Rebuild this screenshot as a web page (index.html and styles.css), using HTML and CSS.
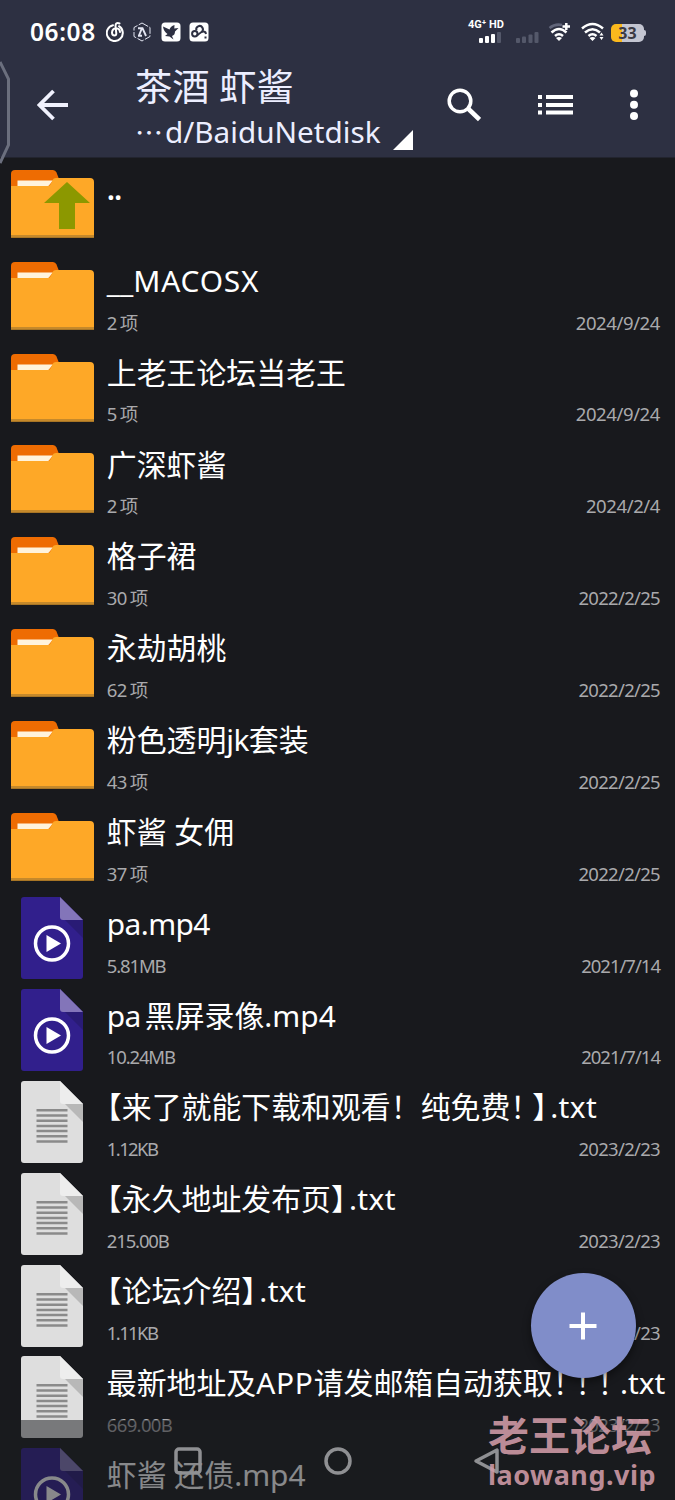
FILE: index.html
```html
<!DOCTYPE html>
<html lang="zh-CN">
<head>
<meta charset="utf-8">
<title>BaiduNetdisk</title>
<link rel="stylesheet" href="styles.css">
</head>
<body>
<svg class="defs" width="0" height="0" aria-hidden="true">
  <symbol id="folder" viewBox="0 0 84 68">
    <path d="M0 15V4Q0 0 4 0H42Q44.500 0 45.500 2.500L48 9V18H0Z" fill="#ee6c02"/>
    <path d="M6.500 10.500H42L37 16.500H6.500Z" fill="#fff3dc"/>
    <path d="M0 16H37Q39 16 40 13.500L41.500 10Q42.500 8 45 8H79Q83 8 83 12V67.500H0Z" fill="#fea827"/>
    <path d="M0 65H83V67.500H0Z" fill="#c5892b"/>
  </symbol>
  <symbol id="video" viewBox="0 0 62 82">
    <path d="M3 0H39L62 23V79Q62 82 59 82H3Q0 82 0 79V3Q0 0 3 0Z" fill="#311f8c"/>
    <path d="M44 23H62V41Z" fill="#291b75"/>
    <path d="M39 0L62 23H42Q39 23 39 20Z" fill="#8375b9"/>
    <circle cx="31" cy="46.500" r="16.500" fill="none" stroke="#fff" stroke-width="3.500"/>
    <path d="M25.500 38V55L40 46.500Z" fill="#fff"/>
  </symbol>
  <symbol id="text" viewBox="0 0 62 82">
    <path d="M3 0H39L62 23V79Q62 82 59 82H3Q0 82 0 79V3Q0 0 3 0Z" fill="#dedede"/>
    <path d="M44 23H62V41Z" fill="#b8b8b8"/>
    <path d="M39 0L62 23H42Q39 23 39 20Z" fill="#ededed"/>
    <path d="M15.500 29.300h31M15.500 34.500h31M15.500 39.700h31M15.500 44.900h31M15.500 50.100h31M15.500 55.300h31M15.500 60.500h31" stroke="#8a8a8a" stroke-width="2.500"/>
  </symbol>
</svg>
<div class="screen">
  <header class="top">
    <div class="status">
      <div class="status-left">
        <span class="clock">06:08</span>
        <svg width="19" height="20" viewBox="0 0 19 20" fill="none" stroke="#fff" stroke-width="2" stroke-linecap="round"><path d="M7 3.200A8 8 0 1 0 13 4.200M13.500 1.500Q9.500 0 9.500 4L10.300 11.500Q10.300 13.500 8.500 13.500Q6 13.500 6 10.500Q6.300 6.500 10 6.200Q13.800 6.500 14 10"/></svg>
        <svg width="18" height="20" viewBox="0 0 18 20" fill="none" stroke="#e4e6f2" stroke-width="1"><path d="M9 1L17 5.500V14.500L9 19L1 14.500V5.500Z" stroke-dasharray="7 1.500"/><path d="M5 6.200H9.500L13 14M5 13.800H9M8.800 6.500L6 13.500" stroke-width="1.900"/></svg>
        <svg class="app" width="20" height="20" viewBox="0 0 20 20"><rect x=".5" y=".5" width="19" height="19" rx="3.500" fill="#fff"/><path d="M2 4.500L8.500 7.500Q9.500 4 13.500 3L13.300 6.500L17.500 6L14 9.500Q14 13 11 14L12.500 17.500L8.500 14.500L4 14L6.500 12Q2.500 9 2 4.500Z" fill="#2d3042"/></svg>
        <svg class="app" width="20" height="20" viewBox="0 0 20 20"><rect x=".5" y=".5" width="19" height="19" rx="3.500" fill="#fff"/><g fill="none" stroke="#2d3042" stroke-width="2"><circle cx="5.800" cy="11.800" r="2.700"/><path d="M7.500 8.500A3.300 3.300 0 1 1 12.500 10Q10.500 11.500 8 13.500M12.500 10Q16.500 8.500 17 12M16.500 14.500V16.500"/></g></svg>
      </div>
      <div class="status-right">
        <div class="cell"><span class="net">4G⁺ HD</span><svg class="bars" width="24" height="11" viewBox="0 0 24 11"><g fill="#fff"><rect x="1" y="6" width="4" height="5" rx="1"/><rect x="7" y="4" width="4" height="7" rx="1"/><rect x="13" y="2" width="4" height="9" rx="1"/></g><rect x="19" y="0" width="4" height="11" rx="1" fill="#54586a"/></svg></div>
        <svg class="bars-off" width="23" height="12" viewBox="0 0 23 12" fill="#54586a"><rect x="0" y="6" width="4" height="5" rx="1"/><rect x="6" y="4.500" width="4" height="6.500" rx="1"/><rect x="12.500" y="2.500" width="4" height="8.500" rx="1"/><rect x="18.500" y="0" width="4" height="11" rx="1"/></svg>
        <svg class="wifi-plus" width="24" height="20" viewBox="0 0 24 20" fill="none" stroke="#fff" stroke-width="2.500"><path d="M1.500 6Q7 1.500 14 3" stroke="#61657a"/><path d="M3.500 10.500Q11 3.500 18.500 10.500M7 14Q11 10.500 15 14M14.500 4.500H22M18.300 1V8"/><path d="M8 16Q11 13.800 14 16L11 19Z" fill="#fff" stroke="none"/></svg>
        <svg class="wifi" width="24" height="20" viewBox="0 0 24 20" fill="none" stroke="#fff" stroke-width="2.500"><path d="M1 6.500Q11.500-2.500 22 6.500M4 10.500Q11.500 4 19 10.500M7.500 14Q11.500 10.500 15.500 14"/><path d="M8.500 16Q11.500 13.800 14.500 16L11.500 19ZM18.500 13.500L20.500 10.500L22.500 13.500ZM18.500 15L20.500 18L22.500 15Z" fill="#fff" stroke="none"/></svg>
        <div class="battery">33</div>
      </div>
    </div>
    <div class="toolbar">
      <svg class="back" width="32" height="32" viewBox="0 0 32 32" fill="none" stroke="#f0f1fd" stroke-width="3.800"><path d="M31 16H3M16.500 2L2.500 16L16.500 30"/></svg>
      <div class="titles">
        <h1>茶酒 虾酱</h1>
        <div class="path"><span class="dots">…</span><span class="dir">d/BaiduNetdisk</span><i class="corner"></i></div>
      </div>
      <svg class="search" width="34" height="34" viewBox="0 0 34 34" fill="none" stroke="#fff"><circle cx="13" cy="13" r="10.800" stroke-width="3.500"/><path d="M21 20.500L32.500 31.500" stroke-width="4.500"/></svg>
      <svg class="menu" width="35" height="20" viewBox="0 0 35 20" fill="#fff"><path d="M0 0h4v4H0zM8 0h27v4H8zM0 8h4v4H0zM8 8h27v4H8zM0 15.500h4v4H0zM8 15.500h27v4H8z"/></svg>
      <svg class="more" width="8" height="32" viewBox="0 0 8 32" fill="#fff"><circle cx="4" cy="4.500" r="4"/><circle cx="4" cy="15.800" r="4"/><circle cx="4" cy="27" r="4"/></svg>
    </div>
    <svg class="edge" width="12" height="110" viewBox="0 0 12 110"><path d="M0 4L8.500 21V87L0 105" fill="none" stroke="#6b6f7e" stroke-width="3"/></svg>
  </header>

  <main class="list">
    <div class="row"><div class="icon"><svg width="84" height="68"><use href="#folder"/><path d="M56 12L79 33H64V59H48V33H33Z" fill="#8c9800"/></svg></div><div class="info"><div class="name up">..</div></div></div>
    <div class="row"><div class="icon"><svg width="84" height="68"><use href="#folder"/></svg></div><div class="info"><div class="name"><span class="under">__</span><span class="caps">MACOSX</span></div><div class="meta"><span>2<b>项</b></span><span class="date wide">2024/9/24</span></div></div></div>
    <div class="row"><div class="icon"><svg width="84" height="68"><use href="#folder"/></svg></div><div class="info"><div class="name">上老王论坛当老王</div><div class="meta"><span>5<b>项</b></span><span class="date wide">2024/9/24</span></div></div></div>
    <div class="row"><div class="icon"><svg width="84" height="68"><use href="#folder"/></svg></div><div class="info"><div class="name">广深虾酱</div><div class="meta"><span>2<b>项</b></span><span class="date wide">2024/2/4</span></div></div></div>
    <div class="row"><div class="icon"><svg width="84" height="68"><use href="#folder"/></svg></div><div class="info"><div class="name">格子裙</div><div class="meta"><span>30<b>项</b></span><span class="date">2022/2/25</span></div></div></div>
    <div class="row"><div class="icon"><svg width="84" height="68"><use href="#folder"/></svg></div><div class="info"><div class="name">永劫胡桃</div><div class="meta"><span>62<b>项</b></span><span class="date">2022/2/25</span></div></div></div>
    <div class="row"><div class="icon"><svg width="84" height="68"><use href="#folder"/></svg></div><div class="info"><div class="name">粉色透明<span class="lat">jk</span>套装</div><div class="meta"><span>43<b>项</b></span><span class="date">2022/2/25</span></div></div></div>
    <div class="row"><div class="icon"><svg width="84" height="68"><use href="#folder"/></svg></div><div class="info"><div class="name">虾酱 女佣</div><div class="meta"><span>37<b>项</b></span><span class="date">2022/2/25</span></div></div></div>
    <div class="row"><div class="icon"><svg width="62" height="82"><use href="#video"/></svg></div><div class="info"><div class="name"><span class="lat">pa.mp4</span></div><div class="meta"><span class="size">5.81MB</span><span class="date tight">2021/7/14</span></div></div></div>
    <div class="row"><div class="icon"><svg width="62" height="82"><use href="#video"/></svg></div><div class="info"><div class="name"><span class="lat gap">pa</span>黑屏录像<span class="ext">.mp4</span></div><div class="meta"><span class="size">10.24MB</span><span class="date tight">2021/7/14</span></div></div></div>
    <div class="row"><div class="icon"><svg width="62" height="82"><use href="#text"/></svg></div><div class="info"><div class="name"><span class="bracket">【</span>来了就能下载和观看！纯免费<span class="half">！</span><span class="bracket">】</span><span class="txt">.txt</span></div><div class="meta"><span class="size narrow">1.12KB</span><span class="date">2023/2/23</span></div></div></div>
    <div class="row"><div class="icon"><svg width="62" height="82"><use href="#text"/></svg></div><div class="info"><div class="name"><span class="bracket">【</span>永久地址发布页<span class="bracket">】</span><span class="txt">.txt</span></div><div class="meta"><span class="size">215.00B</span><span class="date">2023/2/23</span></div></div></div>
    <div class="row"><div class="icon"><svg width="62" height="82"><use href="#text"/></svg></div><div class="info"><div class="name"><span class="bracket">【</span>论坛介绍<span class="bracket">】</span><span class="txt">.txt</span></div><div class="meta"><span class="size narrow">1.11KB</span><span class="date">2023/2/23</span></div></div></div>
    <div class="row"><div class="icon"><svg width="62" height="82"><use href="#text"/></svg></div><div class="info"><div class="name">最新地址及<span class="app-word">APP</span>请发邮箱自动获取<span class="bangs">！！！</span><span class="ext">.txt</span></div><div class="meta"><span>669.00B</span><span class="date">2023/2/23</span></div></div></div>
    <div class="row"><div class="icon"><svg width="62" height="82"><use href="#video"/></svg></div><div class="info"><div class="name">虾酱 还债<span class="ext">.mp4</span></div></div></div>
  </main>

  <div class="fab"><svg width="28" height="28" viewBox="0 0 28 28"><path d="M14 .5V27.500M.5 14H27.500" stroke="#fff" stroke-width="4"/></svg></div>
  <div class="nav">
    <svg width="28" height="28" viewBox="0 0 28 28"><rect x="2" y="2" width="24" height="24" rx="3"/></svg>
    <svg width="28" height="28" viewBox="0 0 28 28"><circle cx="14" cy="14" r="12"/></svg>
    <svg width="28" height="28" viewBox="0 0 28 28"><path d="M24 3V25L3 14Z" stroke-linejoin="round"/></svg>
  </div>
  <div class="mark"><div class="mark-cn">老王论坛</div><div class="mark-url">laowang.vip</div></div>
</div>
</body>
</html>
```
FILE: styles.css
```css
* { box-sizing: border-box; }
body { margin: 0; background: #18191d; font-family: "Noto Sans", "Noto Sans CJK SC", sans-serif; color: #fff; }
svg { display: block; flex: none; }
.defs { position: absolute; }
.screen { position: relative; width: 675px; height: 1500px; overflow: hidden; background: #18191d; }

.top { position: relative; height: 157.500px; background: #2d3042; border-bottom: 1px solid #22242f; }
.edge { position: absolute; left: 0; top: 58px; }
.status { display: flex; justify-content: space-between; height: 64px; padding: 0 29px 0 30px; }
.status-left { display: flex; align-items: center; gap: 8px; }
.app { margin-left: 2px; }
.app + .app { margin-left: 0; }
.clock { width: 68px; font-size: 24.500px; font-weight: 600; line-height: 30px; letter-spacing: .6px; white-space: nowrap; }
.status-right { display: flex; align-items: flex-start; }
.cell { width: 37px; padding-top: 19px; margin-right: 11px; }
.net { display: block; height: 12px; font: 700 11px/12px Roboto, sans-serif; white-space: nowrap; }
.bars { margin: 1px 0 0 10px; }
.bars-off { margin: 32px 9px 0 0; }
.wifi-plus { margin: 22px 9px 0 0; }
.wifi { margin: 22px 6px 0 0; }
.battery { position: relative; width: 33px; height: 18px; margin: 24px 2px 0 0; border-radius: 5px; background: linear-gradient(90deg, #fbb91d 11px, #c3c5d1 11px); color: #3c3b43; font: 700 16px/18px "Noto Sans", sans-serif; text-align: center; }
.battery::after { content: ""; position: absolute; right: -2px; top: 6px; width: 2px; height: 6px; background: #c3c5d1; border-radius: 0 2px 2px 0; }

.toolbar { display: flex; padding-left: 37px; }
.back { margin-top: 25px; }
.titles { flex: none; width: 377px; padding-left: 66px; color: #eceeff; }
h1 { height: 48px; margin: 0; font-size: 37.300px; font-weight: 400; line-height: 46px; white-space: nowrap; }
.path { display: flex; height: 40px; line-height: 40px; font-size: 29.700px; white-space: nowrap; }
.dots { width: 30px; font-family: "Noto Sans CJK SC", sans-serif; font-size: 28px; line-height: 40px; }
.dir { width: 228px; }
.corner { flex: none; width: 20px; height: 20px; margin-top: 18px; background: #fff; clip-path: polygon(100% 0, 100% 100%, 0 100%); }
.search { margin: 24px 0 0 1px; }
.menu { margin: 31px 0 0 57px; }
.more { margin: 25px 0 0 57px; }

.row { display: flex; height: 91.850px; }
.icon { display: flex; align-items: center; justify-content: center; width: 105px; flex: none; padding-top: 1px; }
.icon svg[width="62"] { margin: -1px 0 0 -1px; }
.info { flex: 1; padding: 11.500px 15px 0 1.800px; min-width: 0; }
.name { height: 40px; line-height: 40px; font-size: 29.900px; white-space: nowrap; }
.up { font-weight: 600; letter-spacing: -1px; }
.meta { display: flex; justify-content: space-between; height: 24px; margin-top: 9.800px; line-height: 24px; font-size: 18.500px; letter-spacing: -.65px; color: #a9a9ac; }
.meta b { margin-left: 3px; font-weight: 400; }
.date { letter-spacing: -.7px; }
.wide { letter-spacing: -.4px; }
.tight { letter-spacing: -1px; }
.size { letter-spacing: -1.150px; }
.narrow { letter-spacing: -1.600px; }
.lat { letter-spacing: -.6px; }
.under { letter-spacing: 0; }
.caps { letter-spacing: .8px; }
.app-word { letter-spacing: .7px; }
.ext { letter-spacing: 0; }
.txt { letter-spacing: .4px; margin-left: 3px; }
.gap { margin-right: 4px; }
.bracket { font-family: "Noto Sans CJK SC", sans-serif; font-feature-settings: "halt"; line-height: 1; }
.half { letter-spacing: -8px; }
.bangs { letter-spacing: -7.500px; }

.fab { position: absolute; left: 530.500px; top: 1273px; width: 105px; height: 105px; border-radius: 50%; background: #808dc9; display: flex; align-items: center; justify-content: center; box-shadow: 0 4px 9px rgba(0, 0, 0, .45); }
.nav { position: absolute; left: 0; right: 0; bottom: 0; height: 80px; padding: 27px 174px 0; display: flex; justify-content: space-between; background: rgba(27, 28, 32, .52); }
.nav svg { fill: none; stroke: #8f9093; stroke-width: 3.500; }
.mark { position: absolute; left: 488px; top: 1408px; color: rgba(211, 157, 169, .88); font-weight: 700; white-space: nowrap; }
.mark-cn { height: 50px; font: 700 41px/50px "Noto Sans CJK SC", sans-serif; }
.mark-url { height: 34px; font-size: 27px; line-height: 34px; letter-spacing: .5px; }
```
